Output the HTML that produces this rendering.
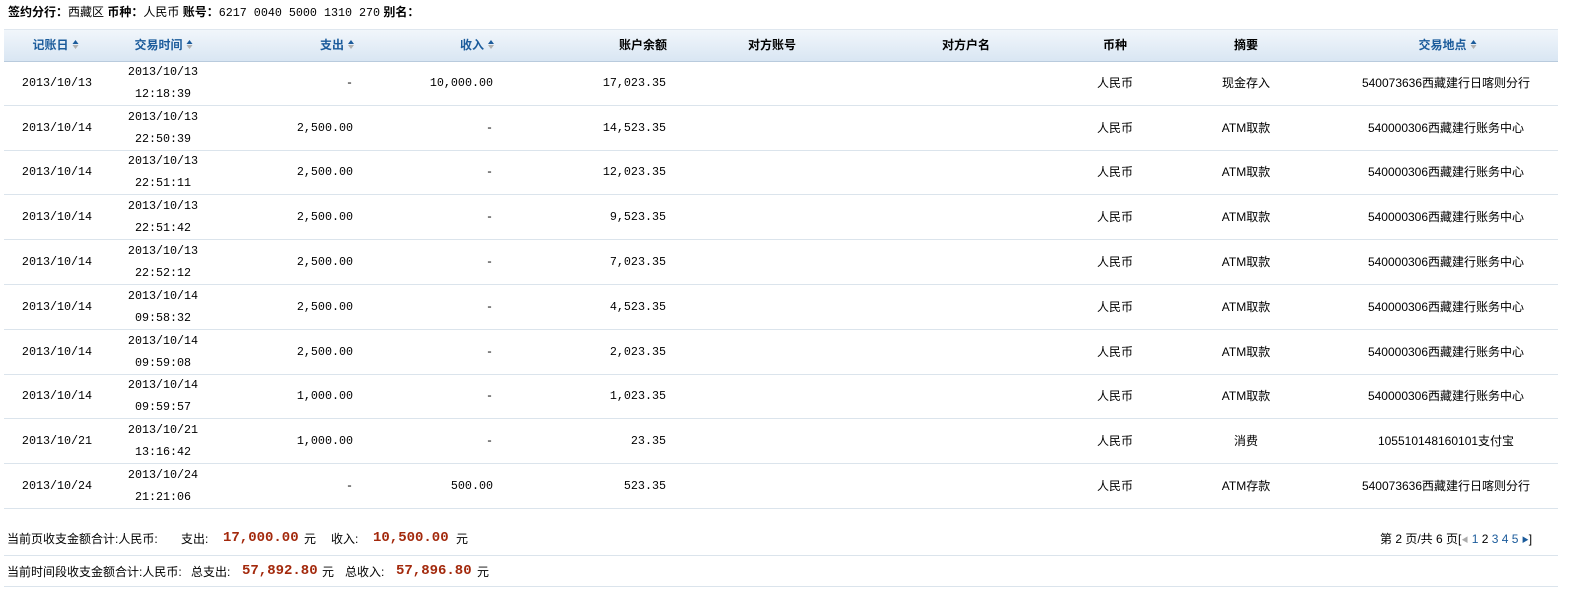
<!DOCTYPE html>
<html><head><meta charset="utf-8"><style>
body{margin:0;width:1576px;height:599px;background:#fff;font-family:"Liberation Sans","Noto Sans CJK SC",sans-serif;font-size:12px;color:#000;position:relative;overflow:hidden}
.a{position:absolute;white-space:nowrap;line-height:14px}
.m{font-family:"Liberation Mono","Noto Sans CJK SC",monospace;font-size:11.7px}
.c{transform:translateX(-50%)}
.r{transform:translateX(-100%)}
.hd{position:absolute;left:4px;top:29px;width:1554px;height:31px;background:linear-gradient(#f1f6fb,#d9e6f3);border-top:1px solid #dfe7ef;border-bottom:1px solid #b9cbdd}
.th{font-weight:bold;top:38px}
.bl{color:#1b5b9b}
.ar{display:inline-block;width:7px;height:10px;margin-left:4px;vertical-align:-1px;position:relative}
.ar:before{content:"";position:absolute;left:0;top:0;border:3.5px solid transparent;border-bottom:4px solid #1b5b9b;border-top:0}
.ar:after{content:"";position:absolute;left:0;top:5px;border:3.5px solid transparent;border-top:4px solid #b0b0b0;border-bottom:0}
.ln{position:absolute;left:4px;width:1554px;height:1px;background:#dbe4ec}
.red{color:#a3290c;font-family:"Liberation Mono",monospace;font-weight:bold;font-size:14px}
</style></head><body>
<div class="a" style="left:8px;top:5px"><b>签约分行：</b>西藏区 <b>币种：</b>人民币 <b>账号：</b><span class="m">6217 0040 5000 1310 270</span> <b>别名：</b></div>
<div class="hd"></div>
<div class="a th bl c" style="left:56px">记账日<span class="ar"></span></div>
<div class="a th bl c" style="left:164px">交易时间<span class="ar"></span></div>
<div class="a th bl r" style="left:355px">支出<span class="ar"></span></div>
<div class="a th bl r" style="left:495px">收入<span class="ar"></span></div>
<div class="a th r" style="left:667px">账户余额</div>
<div class="a th c" style="left:772px">对方账号</div>
<div class="a th c" style="left:966px">对方户名</div>
<div class="a th c" style="left:1115px">币种</div>
<div class="a th c" style="left:1246px">摘要</div>
<div class="a th bl c" style="left:1448px">交易地点<span class="ar"></span></div>

<div class="a m c" style="left:57px;top:76px">2013/10/13</div><div class="a m c" style="left:163px;top:65px">2013/10/13</div><div class="a m c" style="left:163px;top:87px">12:18:39</div><div class="a m r" style="left:353px;top:76px">-</div><div class="a m r" style="left:493px;top:76px">10,000.00</div><div class="a m r" style="left:666px;top:76px">17,023.35</div><div class="a c" style="left:1115px;top:76px">人民币</div><div class="a c" style="left:1246px;top:76px">现金存入</div><div class="a c" style="left:1446px;top:76px">540073636西藏建行日喀则分行</div><div class="ln" style="top:105px"></div>

<div class="a m c" style="left:57px;top:121px">2013/10/14</div><div class="a m c" style="left:163px;top:110px">2013/10/13</div><div class="a m c" style="left:163px;top:132px">22:50:39</div><div class="a m r" style="left:353px;top:121px">2,500.00</div><div class="a m r" style="left:493px;top:121px">-</div><div class="a m r" style="left:666px;top:121px">14,523.35</div><div class="a c" style="left:1115px;top:121px">人民币</div><div class="a c" style="left:1246px;top:121px">ATM取款</div><div class="a c" style="left:1446px;top:121px">540000306西藏建行账务中心</div><div class="ln" style="top:150px"></div>

<div class="a m c" style="left:57px;top:165px">2013/10/14</div><div class="a m c" style="left:163px;top:154px">2013/10/13</div><div class="a m c" style="left:163px;top:176px">22:51:11</div><div class="a m r" style="left:353px;top:165px">2,500.00</div><div class="a m r" style="left:493px;top:165px">-</div><div class="a m r" style="left:666px;top:165px">12,023.35</div><div class="a c" style="left:1115px;top:165px">人民币</div><div class="a c" style="left:1246px;top:165px">ATM取款</div><div class="a c" style="left:1446px;top:165px">540000306西藏建行账务中心</div><div class="ln" style="top:194px"></div>

<div class="a m c" style="left:57px;top:210px">2013/10/14</div><div class="a m c" style="left:163px;top:199px">2013/10/13</div><div class="a m c" style="left:163px;top:221px">22:51:42</div><div class="a m r" style="left:353px;top:210px">2,500.00</div><div class="a m r" style="left:493px;top:210px">-</div><div class="a m r" style="left:666px;top:210px">9,523.35</div><div class="a c" style="left:1115px;top:210px">人民币</div><div class="a c" style="left:1246px;top:210px">ATM取款</div><div class="a c" style="left:1446px;top:210px">540000306西藏建行账务中心</div><div class="ln" style="top:239px"></div>

<div class="a m c" style="left:57px;top:255px">2013/10/14</div><div class="a m c" style="left:163px;top:244px">2013/10/13</div><div class="a m c" style="left:163px;top:266px">22:52:12</div><div class="a m r" style="left:353px;top:255px">2,500.00</div><div class="a m r" style="left:493px;top:255px">-</div><div class="a m r" style="left:666px;top:255px">7,023.35</div><div class="a c" style="left:1115px;top:255px">人民币</div><div class="a c" style="left:1246px;top:255px">ATM取款</div><div class="a c" style="left:1446px;top:255px">540000306西藏建行账务中心</div><div class="ln" style="top:284px"></div>

<div class="a m c" style="left:57px;top:300px">2013/10/14</div><div class="a m c" style="left:163px;top:289px">2013/10/14</div><div class="a m c" style="left:163px;top:311px">09:58:32</div><div class="a m r" style="left:353px;top:300px">2,500.00</div><div class="a m r" style="left:493px;top:300px">-</div><div class="a m r" style="left:666px;top:300px">4,523.35</div><div class="a c" style="left:1115px;top:300px">人民币</div><div class="a c" style="left:1246px;top:300px">ATM取款</div><div class="a c" style="left:1446px;top:300px">540000306西藏建行账务中心</div><div class="ln" style="top:329px"></div>

<div class="a m c" style="left:57px;top:345px">2013/10/14</div><div class="a m c" style="left:163px;top:334px">2013/10/14</div><div class="a m c" style="left:163px;top:356px">09:59:08</div><div class="a m r" style="left:353px;top:345px">2,500.00</div><div class="a m r" style="left:493px;top:345px">-</div><div class="a m r" style="left:666px;top:345px">2,023.35</div><div class="a c" style="left:1115px;top:345px">人民币</div><div class="a c" style="left:1246px;top:345px">ATM取款</div><div class="a c" style="left:1446px;top:345px">540000306西藏建行账务中心</div><div class="ln" style="top:374px"></div>

<div class="a m c" style="left:57px;top:389px">2013/10/14</div><div class="a m c" style="left:163px;top:378px">2013/10/14</div><div class="a m c" style="left:163px;top:400px">09:59:57</div><div class="a m r" style="left:353px;top:389px">1,000.00</div><div class="a m r" style="left:493px;top:389px">-</div><div class="a m r" style="left:666px;top:389px">1,023.35</div><div class="a c" style="left:1115px;top:389px">人民币</div><div class="a c" style="left:1246px;top:389px">ATM取款</div><div class="a c" style="left:1446px;top:389px">540000306西藏建行账务中心</div><div class="ln" style="top:418px"></div>

<div class="a m c" style="left:57px;top:434px">2013/10/21</div><div class="a m c" style="left:163px;top:423px">2013/10/21</div><div class="a m c" style="left:163px;top:445px">13:16:42</div><div class="a m r" style="left:353px;top:434px">1,000.00</div><div class="a m r" style="left:493px;top:434px">-</div><div class="a m r" style="left:666px;top:434px">23.35</div><div class="a c" style="left:1115px;top:434px">人民币</div><div class="a c" style="left:1246px;top:434px">消费</div><div class="a c" style="left:1446px;top:434px">105510148160101支付宝</div><div class="ln" style="top:463px"></div>

<div class="a m c" style="left:57px;top:479px">2013/10/24</div><div class="a m c" style="left:163px;top:468px">2013/10/24</div><div class="a m c" style="left:163px;top:490px">21:21:06</div><div class="a m r" style="left:353px;top:479px">-</div><div class="a m r" style="left:493px;top:479px">500.00</div><div class="a m r" style="left:666px;top:479px">523.35</div><div class="a c" style="left:1115px;top:479px">人民币</div><div class="a c" style="left:1246px;top:479px">ATM存款</div><div class="a c" style="left:1446px;top:479px">540073636西藏建行日喀则分行</div><div class="ln" style="top:508px"></div>

<div class="a" style="left:7px;top:532px">当前页收支金额合计:人民币:</div>
<div class="a" style="left:181px;top:532px">支出:</div>
<div class="a red" style="left:223px;top:531px">17,000.00</div>
<div class="a" style="left:304px;top:532px">元</div>
<div class="a" style="left:331px;top:532px">收入:</div>
<div class="a red" style="left:373px;top:531px">10,500.00</div>
<div class="a" style="left:456px;top:532px">元</div>
<div class="a" style="left:1380px;top:532px">第 2 页/共 6 页[<span style="color:#aaa;font-size:7px;vertical-align:1px">◀</span><span style="color:#1b5b9b"> 1 </span>2<span style="color:#1b5b9b"> 3 4 5 </span><span style="font-size:7px;color:#1b5b9b;vertical-align:1px">▶</span>]</div>
<div class="ln" style="top:555px"></div>
<div class="a" style="left:7px;top:565px">当前时间段收支金额合计:人民币:</div>
<div class="a" style="left:191px;top:565px">总支出:</div>
<div class="a red" style="left:242px;top:564px">57,892.80</div>
<div class="a" style="left:322px;top:565px">元</div>
<div class="a" style="left:345px;top:565px">总收入:</div>
<div class="a red" style="left:396px;top:564px">57,896.80</div>
<div class="a" style="left:477px;top:565px">元</div>
<div class="ln" style="top:586px"></div>
</body></html>
